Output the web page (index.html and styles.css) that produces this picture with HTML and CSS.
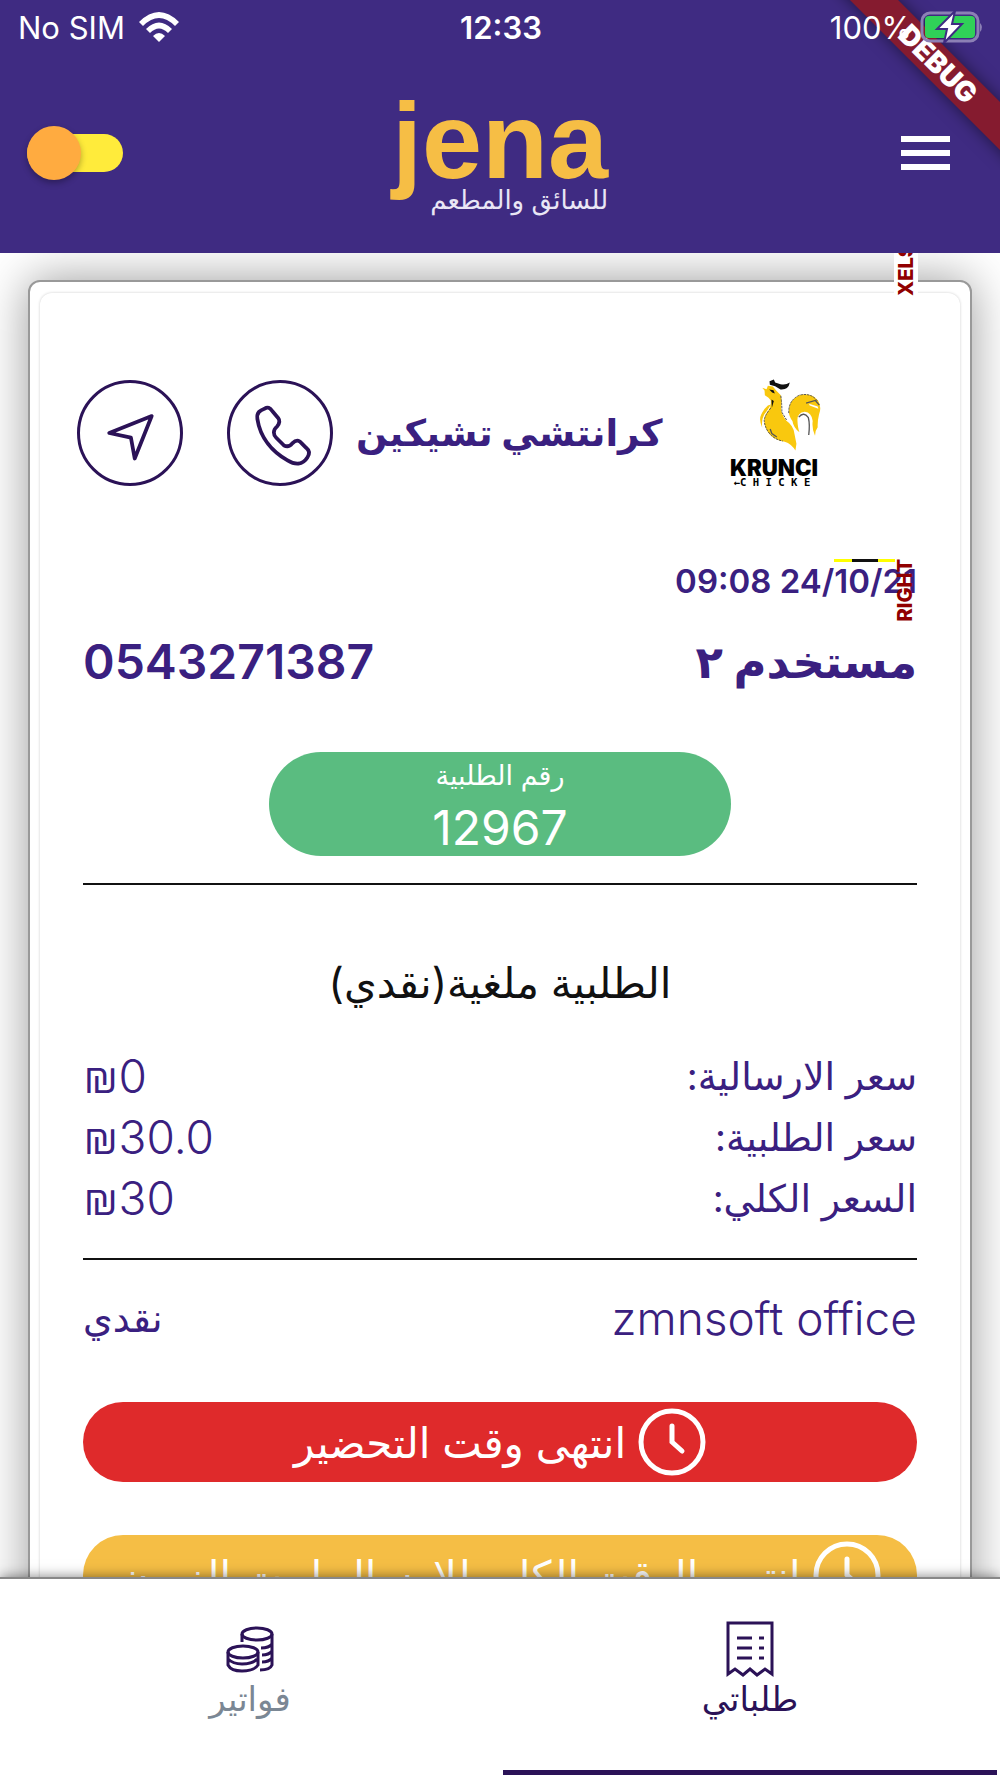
FILE: index.html
```
<!DOCTYPE html>
<html lang="ar" dir="rtl">

<head>
    <meta charset="UTF-8">
    <meta name="viewport" content="width=device-width, initial-scale=1.0">
    <title>jena</title>
    <link rel="stylesheet" href="styles.css">
</head>

<body>
    <header class="header">
        <div class="debug"><span>DEBUG</span></div>
        <div class="status" dir="ltr">
            <div class="status-side">
                <span>No SIM</span>
                <svg class="wifi" viewBox="0 0 40 30">
                    <path d="M0 10Q20 -10 40 10L36 14Q20 -2 4 14Z" />
                    <path d="M7 17Q20 4 33 17L29 21Q20 12 11 21Z" />
                    <path d="M14 24Q20 18 26 24L20 30Z" />
                </svg>
            </div>
            <span class="time">12:33</span>
            <div class="status-side right">
                <span>100%</span>
                <svg class="battery" viewBox="0 0 64 32">
                    <rect x="2" y="2" width="56" height="28" rx="8" fill="none" stroke="#8c80b5" stroke-width="3" />
                    <rect x="5" y="5" width="50" height="22" rx="4" fill="#30d158" />
                    <path d="M60 12Q64 16 60 21Z" fill="#8c80b5" />
                    <path d="M35 0L17 18H27L24 32L42 13H32Z" fill="#fff" stroke="#3f2b82" stroke-width="2" />
                </svg>
            </div>
        </div>
        <div class="bar">
            <button class="menu" aria-label="القائمة"><i></i><i></i><i></i></button>
            <div class="brand">
                <h1 dir="ltr">jena</h1>
                <p>للسائق والمطعم</p>
            </div>
            <input class="switch" type="checkbox" role="switch" aria-label="متاح">
        </div>
    </header>

    <main class="content">
        <span class="overflow-mark top">XELS</span>
        <article class="card">
            <div class="card-inner">
                <section class="shop">
                    <svg class="shop-logo" viewBox="90 55 280 330">
                        <path fill="#f9c80e" d="M197 92L190 84L203 88L207 78L222 80L232 92L246 106Q251 124 247 144Q247 164 262 182Q285 198 287 222L293 252L290 273Q278 252 258 246Q234 243 217 229Q202 215 197 194Q193 176 203 160Q218 143 216 122L209 114L198 106Z" />
                        <path fill="#f9c80e" d="M216 134Q207 151 196 164Q187 180 190 204Q179 180 187 164Q197 145 207 137Z" />
                        <path fill="#f9c80e" d="M270 154Q270 120 302 106Q336 96 358 122Q370 142 361 164Q356 185 357 203Q349 213 349 228Q339 208 342 184Q339 158 318 156Q296 158 296 181Q297 205 302 218Q284 204 281 184Q270 170 270 154Z" />
                        <path fill="none" stroke="#555" stroke-width="3" stroke-dasharray="7 3" d="M246 108Q250 140 249 157L264 182M216 145Q198 166 196 182Q198 207 216 226Q232 241 252 244M270 160Q268 122 302 106Q338 98 356 124" />
                        <path fill="none" stroke="#555" stroke-width="4" d="M300 172Q315 154 329 174Q334 194 330 226M322 130L350 122L362 136M214 208L219 222L234 232" />
                        <path fill="#fff" d="M331 132L357 140L359 147L333 137Z" />
                        <path fill="#111" d="M212 64L225 59L229 68L245 73Q260 77 273 68Q269 91 245 89L229 79L213 75ZM211 89L224 91L228 101L220 98ZM218 119L225 124L219 145Z" />
                        <text x="93" y="348" class="logo-name">KRUNCI</text>
                        <text x="104" y="381" class="logo-sub">←C&#160;H&#160;I&#160;C&#160;K&#160;E</text>
                    </svg>
                    <h2>كرانتشي تشيكين</h2>
                    <div class="actions">
                        <button class="round" aria-label="اتصال">
                            <svg viewBox="0 0 106 106">
                                <path d="M29 38C28 31 32 29 37 27Q41 24 45 30L51 37Q54 41 50 46C45 50 46 55 49 58L57 66Q62 69 66 64C70 60 73 60 76 64L81 69Q86 73 82 79C77 87 69 87 61 82C45 73 32 58 29 38Z" />
                            </svg>
                        </button>
                        <button class="round" aria-label="الموقع">
                            <svg viewBox="0 0 106 106">
                                <path d="M76 35L31 53L54 58L58 80Z" />
                            </svg>
                        </button>
                    </div>
                </section>

                <section class="customer">
                    <span class="overflow-line"></span>
                    <span class="overflow-mark">RIGHT</span>
                    <time dir="ltr">09:08 24/10/21</time>
                    <div class="line">
                        <h3>مستخدم ٢</h3>
                        <a href="tel:0543271387">0543271387</a>
                    </div>
                </section>

                <div class="order-number">
                    <span>رقم الطلبية</span>
                    <strong>12967</strong>
                </div>

                <section class="prices">
                    <h3>الطلبية ملغية(نقدي)</h3>
                    <dl>
                        <div class="line">
                            <dt>سعر الارسالية:</dt>
                            <dd dir="ltr">₪0</dd>
                        </div>
                        <div class="line">
                            <dt>سعر الطلبية:</dt>
                            <dd dir="ltr">₪30.0</dd>
                        </div>
                        <div class="line">
                            <dt>السعر الكلي:</dt>
                            <dd dir="ltr">₪30</dd>
                        </div>
                    </dl>
                </section>

                <div class="line office">
                    <span>zmnsoft office</span>
                    <span>نقدي</span>
                </div>

                <div class="timer red">
                    <svg viewBox="0 0 68 68">
                        <circle cx="34" cy="34" r="31" />
                        <path d="M34 18V34L44 43" />
                    </svg>
                    <span>انتهى وقت التحضير</span>
                </div>
                <div class="timer yellow">
                    <svg viewBox="0 0 68 68">
                        <circle cx="34" cy="34" r="31" />
                        <path d="M34 18V34L44 43" />
                    </svg>
                    <span>انتهى الوقت الكلي للارسال لبيت الزبون</span>
                </div>
            </div>
        </article>
    </main>

    <nav class="tabs">
        <a href="#orders" class="active">
            <svg viewBox="0 0 48 56">
                <path stroke-width="3" d="M2 53V2H46V53L39 48L31 54L24 48L17 54L9 48Z" />
                <path stroke-width="3" d="M11 17H26M33 17H38M11 27H26M33 27H38M11 37H26M33 37H38" />
            </svg>
            <span>طلباتي</span>
        </a>
        <a href="#invoices">
            <svg viewBox="0 4 48 56">
                <g stroke-width="3">
                    <ellipse cx="31" cy="17" rx="15" ry="6" />
                    <path d="M16 17V25M46 17V48Q44 53 34 53M46 27Q43 31 35 31M46 34Q43 38 36 38M46 41Q43 45 36 45" />
                    <ellipse cx="17" cy="35" rx="15" ry="6" />
                    <path d="M2 35V48Q5 54 16 54Q28 54 32 48V35M2 42Q7 47 16 47Q27 47 31 42" />
                </g>
            </svg>
            <span>فواتير</span>
        </a>
    </nav>
</body>

</html>
```
FILE: styles.css
```
* {
    box-sizing: border-box;
}

body {
    margin: 0;
    height: 100vh;
    display: flex;
    flex-direction: column;
    background: white;
    color: #3a2080;
    font-family: Inter, "DejaVu Sans", sans-serif;
}

h1,
h2,
h3,
p,
dl,
dd {
    margin: 0;
}

button {
    border: none;
    background: none;
    padding: 0;
}

a {
    color: inherit;
    text-decoration: none;
}

.header {
    position: relative;
    flex: none;
    background: #3f2b82;
    color: white;
    padding-bottom: 19px;
}

.debug {
    position: absolute;
    top: 0;
    right: 0;
    width: 170px;
    height: 170px;
    overflow: hidden;
}

.debug span {
    position: absolute;
    top: 47px;
    right: -68px;
    width: 260px;
    transform: rotate(45deg);
    background: #851b2f;
    box-shadow: 0 0 16px rgba(0, 0, 0, 0.5);
    text-align: center;
    font-size: 28px;
    font-weight: 900;
    line-height: 34px;
}

.status {
    position: relative;
    display: grid;
    grid-template-columns: 1fr auto 1fr;
    align-items: center;
    height: 54px;
    padding: 0 16px 0 18px;
    font-size: 31px;
}

.status-side {
    display: flex;
    align-items: center;
    gap: 14px;
}

.status-side.right {
    justify-content: flex-end;
    gap: 8px;
}

.wifi {
    width: 40px;
    height: 30px;
    fill: white;
}

.battery {
    width: 64px;
    height: 32px;
}

.time {
    font-weight: 600;
}

.bar {
    display: grid;
    grid-template-columns: 1fr auto 1fr;
    align-items: center;
    height: 180px;
    padding: 18px 27px 0;
}

.menu {
    display: flex;
    flex-direction: column;
    justify-content: space-between;
    width: 49px;
    height: 34px;
    margin-right: 23px;
}

.menu i {
    height: 6px;
    background: white;
}

.brand h1 {
    color: #f6be45;
    font-family: "Liberation Sans", sans-serif;
    font-size: 108px;
    font-weight: 700;
    line-height: 94px;
}

.brand p {
    font-size: 26px;
    line-height: 24px;
    color: #e9e6f5;
}

.switch {
    appearance: none;
    justify-self: end;
    display: flex;
    align-items: center;
    direction: ltr;
    width: 96px;
    height: 38px;
    margin: 0;
    border-radius: 19px;
    background: #ffeb3b;
}

.switch::before {
    content: "";
    width: 54px;
    height: 54px;
    border-radius: 50%;
    background: #ffab40;
    box-shadow: 0 3px 6px rgba(0, 0, 0, 0.3);
}

.content {
    position: relative;
    flex: 1;
    min-height: 0;
    padding: 27px 28px;
    overflow-y: auto;
    scrollbar-width: none;
}

.card {
    padding: 11px 10px;
    border: 2px solid #999;
    border-radius: 12px;
    background: white;
    box-shadow: 0 0 48px rgba(0, 0, 0, 0.4);
}

.card-inner {
    padding: 85px 43px 60px;
    border-radius: 12px;
    box-shadow: 0 0 3px rgba(0, 0, 0, 0.2);
}

.overflow-mark {
    position: absolute;
    writing-mode: vertical-rl;
    transform: rotate(180deg);
    color: #900000;
    font-size: 20px;
    font-weight: 800;
    line-height: 24px;
}

.overflow-mark.top {
    top: -9px;
    right: 82px;
    background: white;
}

.shop {
    display: flex;
    align-items: center;
    justify-content: flex-end;
    margin-left: -6px;
}

.shop-logo {
    width: 93px;
    height: 110px;
    margin-left: 66px;
}

.logo-name {
    font-family: Inter, sans-serif;
    font-size: 67px;
    font-weight: 900;
    direction: ltr;
}

.logo-sub {
    font-family: "DejaVu Sans Mono", monospace;
    font-size: 32px;
    font-weight: 700;
    direction: ltr;
}

.shop h2 {
    font-size: 37px;
    line-height: 60px;
    margin-left: 23px;
}

.actions {
    display: flex;
    gap: 44px;
}

.round {
    width: 106px;
    height: 106px;
    border: 3px solid #2b1257;
    border-radius: 50%;
}

.round svg {
    display: block;
    width: 100%;
    fill: none;
    stroke: #2b1257;
    stroke-width: 4;
    stroke-linejoin: round;
}

.customer {
    position: relative;
    margin-top: 71px;
}

.customer time {
    display: block;
    font-size: 33px;
    font-weight: 600;
    line-height: 44px;
    text-align: right;
}

.customer .overflow-mark {
    top: 0;
    right: 0;
}

.overflow-line {
    position: absolute;
    top: 0;
    right: 22px;
    width: 61px;
    height: 3px;
    background: linear-gradient(to right, #ff0 30%, #111 30%, #111 72%, #ff0 72%);
}

.line {
    display: flex;
    align-items: center;
    justify-content: space-between;
}

.customer .line {
    margin-top: 24px;
    line-height: 70px;
}

.customer h3 {
    font-size: 45px;
}

.customer a {
    font-size: 48px;
    font-weight: 600;
}

.order-number {
    display: flex;
    flex-direction: column;
    align-items: center;
    width: 462px;
    max-width: 100%;
    height: 104px;
    margin: 55px auto 27px;
    border-radius: 52px;
    background: #5abc80;
    color: white;
}

.order-number span {
    font-size: 27px;
    line-height: 48px;
}

.order-number strong {
    font-size: 48px;
    font-weight: 400;
    line-height: 56px;
}

.prices {
    padding: 67px 0 29px;
    border-top: 2px solid #111;
    border-bottom: 2px solid #111;
    font-size: 38px;
    line-height: 61px;
}

.prices h3 {
    margin-bottom: 33px;
    color: #111;
    font-size: 42px;
    font-weight: 400;
    text-align: center;
}

.prices dd,
.office span:first-child {
    font-size: 46px;
    font-weight: 300;
}

.office {
    font-size: 38px;
    line-height: 60px;
    margin: 28px 0 54px;
}

.timer {
    display: flex;
    align-items: center;
    justify-content: center;
    gap: 12px;
    height: 80px;
    margin-bottom: 53px;
    border-radius: 40px;
    color: white;
    font-size: 42px;
    white-space: nowrap;
}

.timer svg {
    flex: none;
    width: 68px;
    height: 68px;
    fill: none;
    stroke: white;
    stroke-width: 5;
    stroke-linecap: round;
}

.red {
    background: #df2a2b;
}

.yellow {
    background: #f5be45;
}

.tabs {
    position: relative;
    display: grid;
    grid-template-columns: 1fr 1fr;
    flex: none;
    height: 201px;
    padding-bottom: 3px;
    background: white;
    border-top: 2px solid #888;
    box-shadow: 0 0 12px rgba(0, 0, 0, 0.5);
}

.tabs a {
    display: flex;
    flex-direction: column;
    align-items: center;
    margin: 0 3px;
    padding-top: 42px;
    border-bottom: 5px solid transparent;
    color: #7b8794;
    font-size: 34px;
    line-height: 44px;
}

.tabs .active {
    border-color: #2b1257;
    color: #2b1257;
}

.tabs svg {
    width: 48px;
    height: 56px;
    fill: none;
    stroke: #2b1257;
}
```
